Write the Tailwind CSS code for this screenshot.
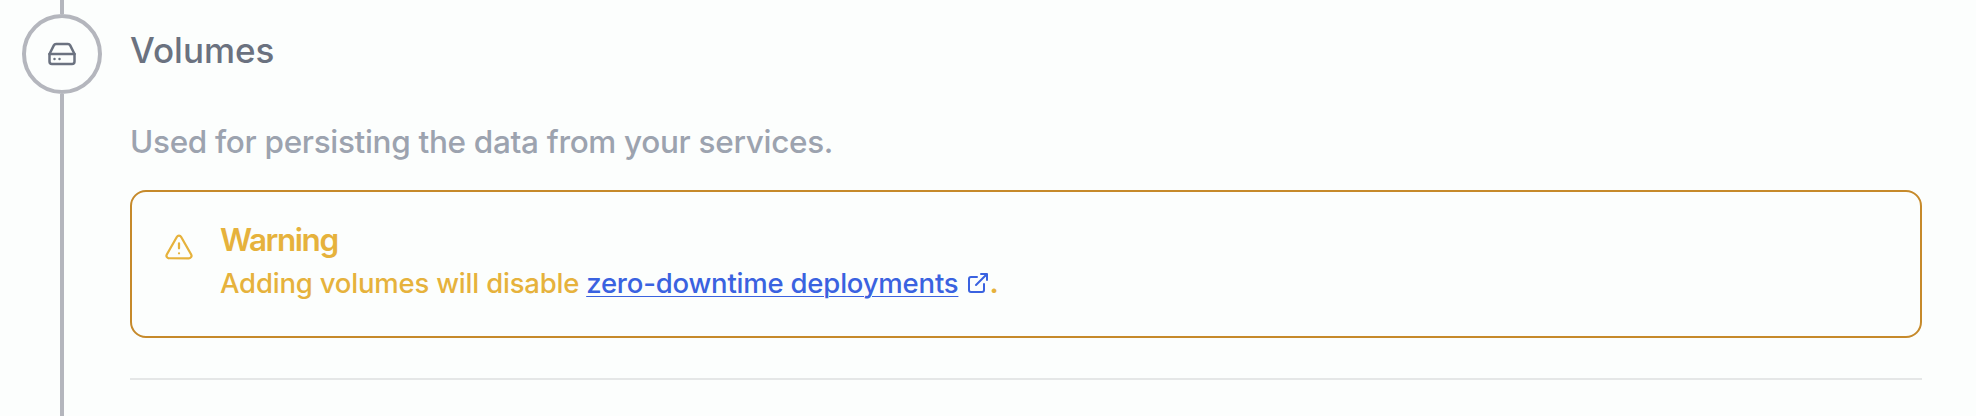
<!DOCTYPE html>
<html lang="en">
<head>
<meta charset="utf-8">
<title>Volumes</title>
<script src="https://cdn.jsdelivr.net/npm/@tailwindcss/browser@4"></script>
</head>
<body class="bg-[#fcfefd] font-['Inter',sans-serif]">
<section class="flex h-[416px] overflow-hidden pl-[22px] pr-[54px]">
  <div class="flex w-20 shrink-0 flex-col items-center">
    <div class="h-[14px] w-1 bg-[#b4b6bd]"></div>
    <div class="flex size-20 shrink-0 items-center justify-center rounded-full border-4 border-[#b4b6bd]">
      <svg class="size-[30px] text-[#6b7280]" viewBox="0 0 24 24" fill="none" stroke="currentColor" stroke-width="2" stroke-linecap="round" stroke-linejoin="round"><path d="M22 12H2"/><path d="M5.45 5.11 2 12v6a2 2 0 0 0 2 2h16a2 2 0 0 0 2-2v-6l-3.45-6.89A2 2 0 0 0 16.76 4H7.24a2 2 0 0 0-1.79 1.11z"/><path d="M6 16h.01M10 16h.01"/></svg>
    </div>
    <div class="w-1 grow bg-[#b4b6bd]"></div>
  </div>
  <div class="ml-7 min-w-0 grow whitespace-nowrap">
    <h2 class="mt-[30px] h-10 text-[35px] font-[450] leading-10 text-[#6b7280]"><span>Volumes</span></h2>
    <p class="mt-[52px] h-10 text-[31.5px] font-[450] leading-10 tracking-[-0.32px] text-[#9ca3af]"><span>Used for persisting the data from your services.</span></p>
    <div class="mt-7 flex h-[148px] rounded-2xl border-2 border-[#c68a2b] pl-8 pt-[30px] text-[#e6b23c]">
      <svg class="mt-[10px] size-[30px] shrink-0" viewBox="0 0 24 24" fill="none" stroke="currentColor" stroke-width="1.8" stroke-linecap="round" stroke-linejoin="round"><path d="m21.73 18-8-14a2 2 0 0 0-3.48 0l-8 14A2 2 0 0 0 4 21h16a2 2 0 0 0 1.73-3Z"/><path d="M12 9v4M12 17h.01"/></svg>
      <div class="ml-[26px]">
        <h3 class="h-9 text-[31.5px] font-semibold leading-9 tracking-[-1.45px]"><span>Warning</span></h3>
        <p class="mt-[5px] flex h-10 text-[27.5px] font-medium leading-10 tracking-[-0.2px]"><span>Adding volumes will disable</span><a class="ml-[7px] flex text-[#3a62e0]"><span class="underline decoration-1 underline-offset-[3px]">zero-downtime deployments</span><svg class="ml-2 mt-2 size-6" viewBox="0 0 24 24" fill="none" stroke="currentColor" stroke-width="2" stroke-linecap="round" stroke-linejoin="round"><path d="M15 3h6v6M10 14 21 3M18 13v6a2 2 0 0 1-2 2H5a2 2 0 0 1-2-2V8a2 2 0 0 1 2-2h6"/></svg></a><span class="-ml-px font-bold">.</span></p>
      </div>
    </div>
    <div class="mt-10 h-0.5 bg-[#e5e7e7]"></div>
  </div>
</section>
</body>
</html>
